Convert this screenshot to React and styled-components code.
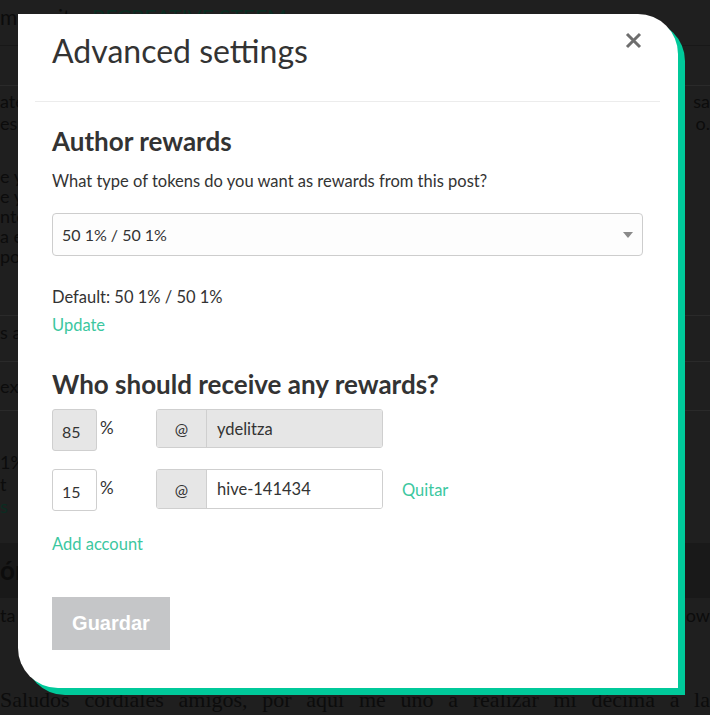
import React from "react";
import styled, { createGlobalStyle } from "styled-components";

const GlobalStyle = createGlobalStyle`
  html, body {
    margin: 0;
    padding: 0;
    background: #1f1f1f;
  }
  * {
    box-sizing: border-box;
  }
`;

const Page = styled.div`
  position: relative;
  width: 710px;
  height: 715px;
  overflow: hidden;
  background: #1f1f1f;
  font-family: Lato, "Open Sans", sans-serif;
`;

/* dimmed page behind the dialog */
const Backdrop = styled.div`
  display: flex;
  flex-direction: column;
  color: #0c0c0c;
  font-size: 18px;
`;

const TopBar = styled.div`
  height: 46px;
  padding: 4px 0 0 0;
  font-size: 21px;
  line-height: 26px;
  border-bottom: 1px solid #181818;
  span {
    color: #0b2c22;
  }
`;

const BgBlock = styled.div`
  height: ${(p) => p.$h}px;
  padding-top: ${(p) => p.$pt || 0}px;
  background: ${(p) => (p.$dark ? "#191919" : "transparent")};
  border-bottom: ${(p) => (p.$line ? "1px solid #2a2a2a" : "none")};
  font-weight: ${(p) => (p.$bold ? 700 : 400)};
  font-size: ${(p) => (p.$bold ? 26 : 18)}px;
`;

const BgLine = styled.div`
  display: flex;
  justify-content: space-between;
  line-height: ${(p) => p.$lh || 20}px;
  color: ${(p) => (p.$green ? "#0b2c22" : "#0c0c0c")};
`;

const BgSerif = styled.div`
  font-family: "Liberation Serif", serif;
  font-size: 22px;
  line-height: 28px;
  text-align: justify;
  text-align-last: justify;
  margin-top: 18px;
`;

const Dialog = styled.div`
  position: absolute;
  left: 18px;
  top: 14px;
  width: 660px;
  height: 674px;
  background: #fff;
  border-radius: 0 40px 0 40px;
  box-shadow: 7px 7px 0 #00c99a;
  color: #333;
`;

const Header = styled.div`
  position: relative;
  margin: 0 18px 0 17px;
  padding: 17px 0 30px 17px;
  border-bottom: 1px solid #ececec;
`;

const Title = styled.h1`
  margin: 0;
  font-size: 32px;
  font-weight: 400;
  line-height: 40px;
  color: #333;
`;

const CloseButton = styled.button`
  position: absolute;
  top: 18px;
  right: 18px;
  padding: 0;
  border: 0;
  background: none;
  cursor: pointer;
  display: flex;
`;

const Body = styled.div`
  padding: 22px 35px 0 34px;
  display: flex;
  flex-direction: column;
`;

const SectionTitle = styled.h2`
  margin: ${(p) => p.$m || "0"};
  font-size: 26px;
  font-weight: 700;
  line-height: 34px;
  color: #333;
`;

const Text = styled.p`
  margin: ${(p) => p.$m || "0"};
  font-size: 16.5px;
  line-height: 24px;
  color: #333;
`;

const LinkText = styled.a`
  display: block;
  margin: ${(p) => p.$m || "0"};
  font-size: 16.5px;
  line-height: 24px;
  color: #3cc79f;
  cursor: pointer;
`;

const Select = styled.div`
  position: relative;
  margin-top: 20px;
  height: 43px;
  padding: 0 30px 0 9px;
  display: flex;
  align-items: center;
  border: 1px solid #cdcdcd;
  border-radius: 4px;
  background: #fdfdfd;
  font-size: 16px;
  color: #333;
  &::after {
    content: "";
    position: absolute;
    right: 9px;
    top: 18px;
    border-left: 5px solid transparent;
    border-right: 5px solid transparent;
    border-top: 6px solid #8a8a8a;
  }
`;

const BeneficiaryRow = styled.div`
  display: flex;
  align-items: flex-start;
  margin-top: ${(p) => p.$mt}px;
`;

const PercentBox = styled.div`
  width: 45px;
  height: 42px;
  display: flex;
  align-items: center;
  padding-left: 9px;
  padding-top: 2px;
  border: 1px solid #cfcfcf;
  border-radius: 3px;
  background: ${(p) => (p.$disabled ? "#e6e6e6" : "#fff")};
  font-size: 16px;
  color: #333;
`;

const PercentSign = styled.span`
  width: 59px;
  padding: 10px 0 0 3px;
  font-size: 17px;
  line-height: 18px;
  color: #333;
`;

const AccountGroup = styled.div`
  width: 227px;
  height: ${(p) => p.$h}px;
  display: flex;
  border: 1px solid #cfcfcf;
  border-radius: 3px;
  overflow: hidden;
`;

const AtAddon = styled.div`
  width: 50px;
  display: flex;
  align-items: center;
  justify-content: center;
  background: #e6e6e6;
  border-right: 1px solid #cfcfcf;
  font-size: 16px;
  color: #333;
`;

const AccountInput = styled.div`
  flex: 1;
  display: flex;
  align-items: center;
  padding-left: 10px;
  background: ${(p) => (p.$disabled ? "#e6e6e6" : "#fff")};
  font-size: 16.5px;
  color: #333;
`;

const RemoveLink = styled.a`
  align-self: center;
  margin-left: 19px;
  font-size: 16.5px;
  color: #3cc79f;
  cursor: pointer;
`;

const SaveButton = styled.button`
  align-self: flex-start;
  margin-top: 41px;
  width: 118px;
  height: 53px;
  border: 0;
  background: #c5c6c8;
  color: #fff;
  font-family: "Liberation Sans", Arial, sans-serif;
  font-weight: 700;
  font-size: 20px;
  cursor: default;
`;

const CloseIcon = () => (
  <svg width="17" height="17" viewBox="0 0 17 17">
    <path d="M2 2 L15 15 M15 2 L2 15" stroke="#6e6e6e" strokeWidth="3" />
  </svg>
);

export default function App() {
  return (
    <Page>
      <GlobalStyle />
      <Backdrop>
        <TopBar>
          mmunity: <span>RECREATIVE STEEM</span>
        </TopBar>
        <BgBlock $h={40} $line />
        <BgBlock $h={80} $pt={4}>
          <BgLine $lh={22}><span>ate</span><span>sa</span></BgLine>
          <BgLine $lh={22}><span>esp</span><span>o.</span></BgLine>
        </BgBlock>
        <BgBlock $h={122}>
          <BgLine><span>e y</span><span /></BgLine>
          <BgLine><span>e y</span><span /></BgLine>
          <BgLine><span>nte</span><span /></BgLine>
          <BgLine><span>a e</span><span /></BgLine>
          <BgLine><span>po</span><span /></BgLine>
        </BgBlock>
        <BgBlock $h={28} $line />
        <BgBlock $h={46} $pt={6} $line>
          <BgLine><span>s a</span><span /></BgLine>
        </BgBlock>
        <BgBlock $h={49} $pt={14} $line>
          <BgLine><span>ex</span><span /></BgLine>
        </BgBlock>
        <BgBlock $h={132} $pt={40}>
          <BgLine $lh={22}><span>1% ,</span><span /></BgLine>
          <BgLine $lh={22}><span>t</span><span /></BgLine>
          <BgLine $lh={22} $green><span>s</span><span /></BgLine>
        </BgBlock>
        <BgBlock $h={55} $pt={12} $dark $bold>
          <BgLine $lh={30}><span>ón</span><span /></BgLine>
        </BgBlock>
        <BgBlock $h={70} $pt={6}>
          <BgLine $lh={22}><span>ta p</span><span>ow</span></BgLine>
        </BgBlock>
        <BgSerif>Saludos cordiales amigos, por aquí me uno a realizar mi décima a la</BgSerif>
      </Backdrop>

      <Dialog>
        <Header>
          <Title>Advanced settings</Title>
          <CloseButton aria-label="Close">
            <CloseIcon />
          </CloseButton>
        </Header>
        <Body>
          <SectionTitle>Author rewards</SectionTitle>
          <Text $m="11px 0 0">
            What type of tokens do you want as rewards from this post?
          </Text>
          <Select>50 1% / 50 1%</Select>
          <Text $m="29px 0 0">Default: 50 1% / 50 1%</Text>
          <LinkText $m="4px 0 0">Update</LinkText>

          <SectionTitle $m="30px 0 0">Who should receive any rewards?</SectionTitle>
          <BeneficiaryRow $mt={8}>
            <PercentBox $disabled>85</PercentBox>
            <PercentSign>%</PercentSign>
            <AccountGroup $h={39}>
              <AtAddon>@</AtAddon>
              <AccountInput $disabled>ydelitza</AccountInput>
            </AccountGroup>
          </BeneficiaryRow>
          <BeneficiaryRow $mt={18}>
            <PercentBox>15</PercentBox>
            <PercentSign>%</PercentSign>
            <AccountGroup $h={40}>
              <AtAddon>@</AtAddon>
              <AccountInput>hive-141434</AccountInput>
            </AccountGroup>
            <RemoveLink>Quitar</RemoveLink>
          </BeneficiaryRow>
          <LinkText $m="21px 0 0">Add account</LinkText>
          <SaveButton>Guardar</SaveButton>
        </Body>
      </Dialog>
    </Page>
  );
}
